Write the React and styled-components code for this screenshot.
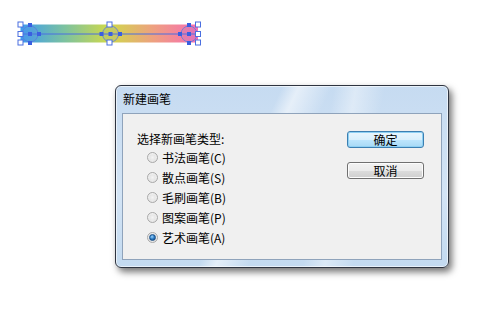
import React from "react";
import styled, { createGlobalStyle } from "styled-components";

const Global = createGlobalStyle`
  html, body { margin: 0; padding: 0; background: #ffffff; }
  body { font-family: "Noto Sans CJK SC", "Liberation Sans", sans-serif; }
`;

const Page = styled.div`
  width: 480px;
  height: 316px;
  display: flex;
  flex-direction: column;
  overflow: hidden;
`;

const Canvas = styled.svg`
  display: block;
  width: 210px;
  height: 50px;
  flex: none;
`;

const Window = styled.div`
  margin: 35px 0 0 115px;
  width: 334px;
  height: 183px;
  box-sizing: border-box;
  border: 1px solid #2e3440;
  border-radius: 6px;
  background:
    linear-gradient(115deg, rgba(255,255,255,0) 40%, rgba(255,255,255,0.55) 44%, rgba(255,255,255,0) 52%),
    linear-gradient(100deg, rgba(255,255,255,0) 60%, rgba(255,255,255,0.4) 66%, rgba(255,255,255,0) 74%),
    linear-gradient(to bottom, #c6dbf1 0%, #d3e4f5 60%, #c3daf0 100%);
  box-shadow: 3px 4px 7px rgba(0,0,0,0.55), inset 0 0 0 1px rgba(255,255,255,0.6);
  display: flex;
  flex-direction: column;
  padding: 0 6px 7px 6px;
`;

const TitleBar = styled.div`
  height: 27px;
  display: flex;
  align-items: center;
  font-size: 12px;
  color: #000;
  padding-left: 1px;
  padding-bottom: 2px;
  box-sizing: border-box;
  line-height: 1;
`;

const Client = styled.div`
  flex: 1;
  background: #f0f0f0;
  border: 1px solid #8fa3bb;
  display: flex;
  padding: 17px 17px 0 14px;
`;

const Options = styled.div`
  display: flex;
  flex-direction: column;
`;

const Caption = styled.div`
  font-size: 12px;
  line-height: 16px;
  color: #000;
`;

const Row = styled.label`
  display: flex;
  align-items: center;
  height: 20px;
  padding-left: 10px;
  font-size: 12px;
  color: #000;
`;

const Radio = styled.span`
  width: 11px;
  height: 11px;
  border-radius: 50%;
  box-sizing: border-box;
  border: 1px solid #a9a9a9;
  background: radial-gradient(circle at 50% 40%, #ffffff 0%, #e8e8e8 70%, #d8d8d8 100%);
  margin-right: 4px;
  display: flex;
  align-items: center;
  justify-content: center;
  flex: none;

  &::after {
    content: "";
    width: 5px;
    height: 5px;
    border-radius: 50%;
    background: ${(p) =>
      p.$checked
        ? "radial-gradient(circle at 40% 35%, #9fd6ff 0%, #2b7cc4 50%, #0f3f78 100%)"
        : "radial-gradient(circle, #f4f4f4 0%, #e2e2e2 100%)"};
    border: 1px solid ${(p) => (p.$checked ? "#1b4f86" : "transparent")};
  }
`;

const Buttons = styled.div`
  margin-left: auto;
  display: flex;
  flex-direction: column;
  gap: 14px;
`;

const Button = styled.button`
  width: 77px;
  height: 17px;
  padding: 0;
  box-sizing: border-box;
  border-radius: 3px;
  border: 1px solid ${(p) => (p.$default ? "#3c7fb1" : "#707070")};
  background: ${(p) =>
    p.$default
      ? "linear-gradient(to bottom, #eaf6fd 0%, #d9f0fc 50%, #bee6fd 51%, #a7d9f5 100%)"
      : "linear-gradient(to bottom, #f2f2f2 0%, #ebebeb 50%, #dddddd 51%, #cfcfcf 100%)"};
  box-shadow: inset 0 0 0 1px ${(p) => (p.$default ? "#8ed0f3" : "#fcfcfc")};
  font-family: "Noto Sans CJK SC", "Liberation Sans", sans-serif;
  font-size: 12px;
  line-height: 15px;
  color: #000;
  display: flex;
  align-items: center;
  justify-content: center;
`;

const options = [
  "书法画笔(C)",
  "散点画笔(S)",
  "毛刷画笔(B)",
  "图案画笔(P)",
  "艺术画笔(A)",
];

function Anchor({ x, y }) {
  return <rect x={x - 2.5} y={y - 2.5} width={5} height={5} fill="#ffffff" stroke="#4a6fe0" strokeWidth="1" />;
}

function Dot({ x, y }) {
  return <rect x={x - 2} y={y - 2} width={4} height={4} fill="#3a5fe0" />;
}

function Knob({ cx }) {
  return <circle cx={cx} cy="34" r="8" fill="rgba(120,140,230,0.18)" stroke="#5a7ae0" strokeWidth="1" opacity="0.8" />;
}

function GradientBar() {
  return (
    <Canvas viewBox="0 0 210 50">
      <defs>
        <linearGradient id="bar" x1="20" y1="0" x2="198" y2="0" gradientUnits="userSpaceOnUse">
          <stop offset="0" stopColor="#3c9cf0" />
          <stop offset="0.25" stopColor="#7cc2a0" />
          <stop offset="0.5" stopColor="#cfd94a" />
          <stop offset="0.75" stopColor="#eea080" />
          <stop offset="1" stopColor="#f86cb4" />
        </linearGradient>
      </defs>
      <rect x="20.5" y="24.5" width="177.5" height="18" fill="url(#bar)" />
      <line x1="20" y1="34" x2="198" y2="34" stroke="#4a6fe0" strokeWidth="1" />
      <Knob cx={30} />
      <Knob cx={110.5} />
      <Knob cx={189} />
      <Dot x={30} y={34} />
      <Dot x={39} y={34} />
      <Dot x={30} y={25} />
      <Dot x={30} y={43} />
      <Dot x={101.5} y={34} />
      <Dot x={110.5} y={34} />
      <Dot x={120} y={34} />
      <Dot x={180} y={34} />
      <Dot x={189} y={34} />
      <Dot x={189} y={25} />
      <Dot x={189} y={43} />
      <Anchor x={20.5} y={24.5} />
      <Anchor x={20.5} y={34} />
      <Anchor x={20.5} y={42.5} />
      <Anchor x={109.5} y={24.5} />
      <Anchor x={109.5} y={42.5} />
      <Anchor x={198} y={24.5} />
      <Anchor x={198} y={34} />
      <Anchor x={198} y={42.5} />
    </Canvas>
  );
}

export default function App() {
  return (
    <Page>
      <Global />
      <GradientBar />
      <Window>
        <TitleBar>新建画笔</TitleBar>
        <Client>
          <Options>
            <Caption>选择新画笔类型:</Caption>
            {options.map((o, i) => (
              <Row key={o}>
                <Radio $checked={i === 4} />
                {o}
              </Row>
            ))}
          </Options>
          <Buttons>
            <Button $default>确定</Button>
            <Button>取消</Button>
          </Buttons>
        </Client>
      </Window>
    </Page>
  );
}
